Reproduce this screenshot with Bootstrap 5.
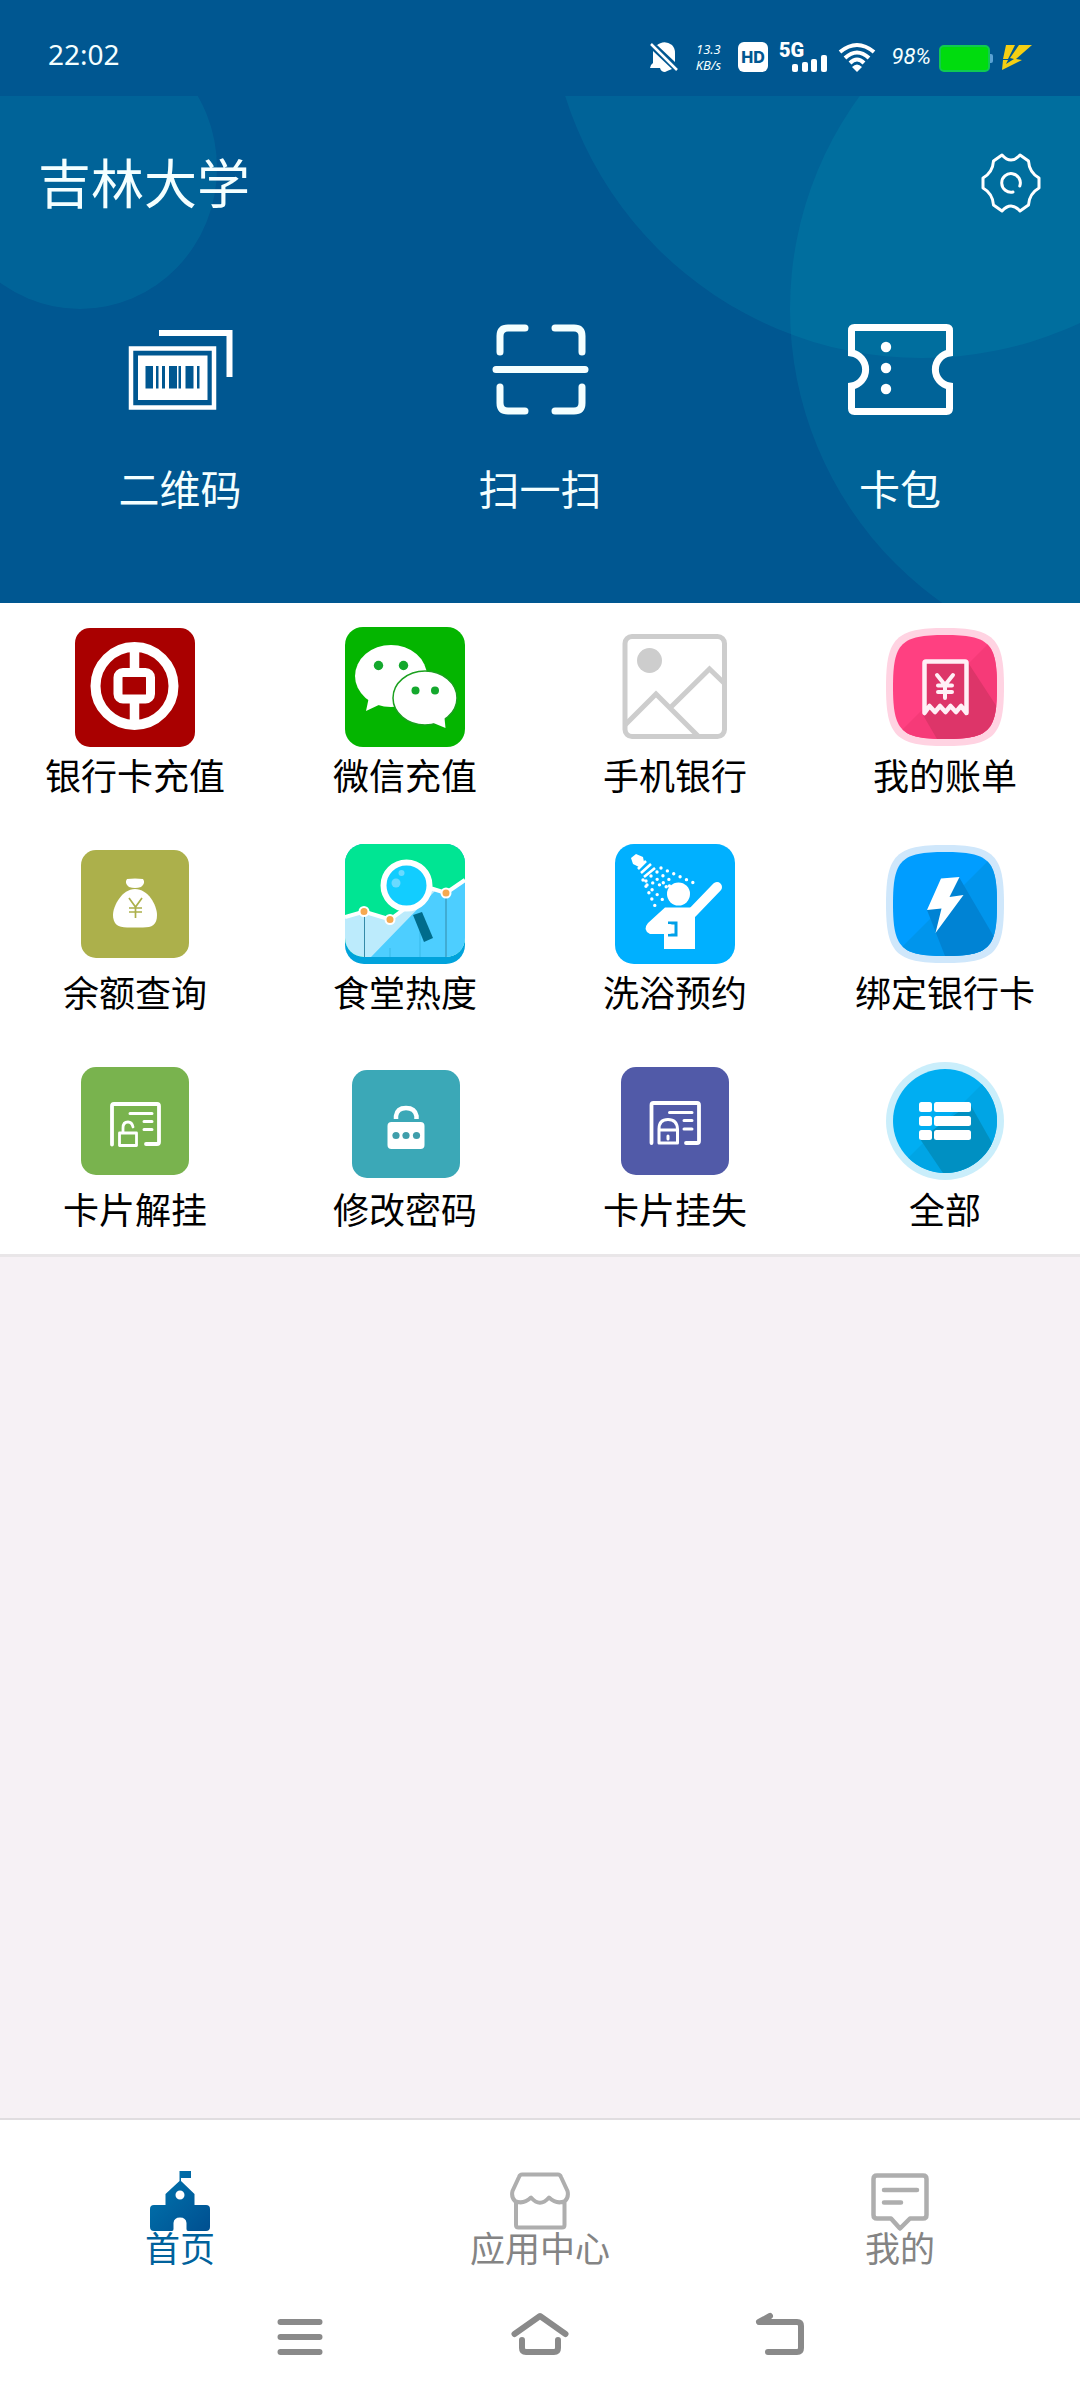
<!DOCTYPE html>
<html lang="zh-CN">
<head>
<meta charset="utf-8">
<meta name="viewport" content="width=device-width, initial-scale=1">
<title>吉林大学</title>
<link href="https://cdn.jsdelivr.net/npm/bootstrap@5.3.0/dist/css/bootstrap.min.css" rel="stylesheet">
<style>
  body { font-family: "Noto Sans CJK SC", sans-serif; background: #f6f1f5; }
  svg { display: block; flex: none; }
  .hero { background: #005791; color: #f4ffff; }
  .status { height: 96px; padding: 42px 48px 24px 48px; line-height: 30px; }
  .clock { font: 28px/26px "Noto Sans", sans-serif; padding-bottom: 6px; }
  .speed { font: italic 13px/16px "Noto Sans", sans-serif; width: 28px; }
  .percent { font: italic 22px/30px Roboto, sans-serif; }
  .banner { padding-bottom: 86px; }
  .banner-bg { position: absolute; inset: 0; width: 100%; height: 100%; }
  .title-row { padding: 51px 39px 0 38px; }
  .title-row h1 { font-size: 53px; line-height: 68px; font-weight: 400; }
  .quick { margin-top: 102px; }
  .quick a { color: inherit; font-size: 41px; line-height: 60px; gap: 40px; }
  .services { padding: 24px 0 22px; border-bottom: 3px solid #e9e6e8; }
  .services a { color: #000; font-size: 36px; line-height: 48px; gap: 3px; padding-bottom: 46px; }
  .services .row:last-child a { padding-bottom: 0; }
  .bottom { border-top: 2px solid #e0dde0; }
  .tabs { padding-top: 51px; }
  .tabs a { color: #848484; font-size: 35px; line-height: 32px; }
  .tabs a.active { color: #00629c; }
  .sysnav { padding: 42px 0 35px; }
  .ln { fill: none; stroke: currentColor; stroke-linecap: round; stroke-linejoin: round; }
</style>
</head>
<body class="d-flex flex-column min-vh-100">

<header class="hero">
  <div class="status d-flex align-items-center">
    <div class="clock me-auto">22:02</div>
    <svg width="28" height="30" viewBox="0 0 28 30" fill="#fff"><path d="M6 4Q14-3 22 3Q25 6 25 11V20L7 3ZM3 9L22 27Q17 29 15 30Q11 30 10 26H0Q0 23 3 21Z"/><path d="M1 2L27 28" stroke="#fff" stroke-width="2.5"/></svg>
    <div class="speed text-center ms-3 me-3">13.3<br>KB/s</div>
    <svg width="30" height="30" viewBox="0 0 30 30"><rect width="30" height="30" rx="6" fill="#fff"/><text x="15" y="21" font-family="Inter,sans-serif" font-weight="800" font-size="16" text-anchor="middle" fill="#005791">HD</text></svg>
    <svg class="ms-2" width="51" height="38" viewBox="-1 -4 51 38" fill="#fff"><text x="2" y="15" font-family="Roboto,sans-serif" font-weight="900" font-size="20">5G</text><rect x="15" y="22" width="6" height="8" rx="2"/><rect x="25" y="20" width="6" height="10" rx="2"/><rect x="34" y="17" width="6" height="13" rx="2"/><rect x="44" y="13" width="6" height="17" rx="2"/></svg>
    <svg class="ms-2" width="44" height="30" viewBox="-4 0 44 30"><g fill="none" stroke="#fff" stroke-width="4"><path d="M1 10Q18-4 35 10M6 16Q18 5 30 16M11 21Q18 14 25 21"/></g><path d="M13 25Q18 20 23 25L18 30Z" fill="#fff"/></svg>
    <div class="percent ms-2 ps-1">98%</div>
    <svg class="ms-2" width="54" height="30" viewBox="0 0 54 30"><rect x="49" y="12" width="5" height="9" rx="2" fill="#5aa2d4"/><rect x="1" y="4" width="49" height="25" rx="4" fill="#00dc0e" stroke="#10c952" stroke-width="2"/></svg>
    <svg class="ms-2" width="31" height="30" viewBox="0 0 31 30" fill="#f5cf13"><path d="M5 3H14L7 17H2ZM18 3H31L15 17L21 18L1 28L2 18H7L5 22L13 17L9 16Z"/></svg>
  </div>

  <div class="banner position-relative">
    <svg class="banner-bg" viewBox="0 96 1080 507" preserveAspectRatio="none" fill="#00b4c3" fill-opacity=".14"><ellipse cx="80" cy="168" rx="137" ry="141"/><circle cx="922" cy="-16" r="374"/><circle cx="1150" cy="309" r="360"/></svg>
    <div class="title-row position-relative d-flex align-items-center justify-content-between">
      <h1 class="m-0 pb-1">吉林大学</h1>
      <button type="button" class="btn p-0 border-0 text-white" aria-label="设置">
        <svg width="60" height="60" viewBox="-30 -30 60 60"><g class="ln" stroke-width="3"><path d="M-9-28Q0-18 9-28L17.500-22C18-14 21-9 28-5V5C21 9 18 14 17.500 22L9 28Q0 18-9 28L-17.500 22C-18 14-21 9-28 5V-5C-21-9-18-14-17.500-22Z"/><path d="M8.800 3A9.300 9.300 0 1 0 2 9"/></g></svg>
      </button>
    </div>
    <nav class="quick position-relative row g-0 text-center">
      <a href="#" class="col-4 d-flex flex-column align-items-center text-decoration-none">
        <svg width="108" height="96" viewBox="0 0 108 96"><g fill="none" stroke="#fff"><path d="M33 12H103.500V56" stroke-width="6"/><path d="M5 27.500H88V86.500H5Z" stroke-width="4.500"/></g><path fill="#fff" d="M12 34.500H81.500V79H12Z"/><path fill="#005791" d="M19.500 45h7.500v22.500h-7.500zM30 45h2.500v22.500H30zM36 45h3v22.500h-3zM43 45h8v22.500h-8zM52.500 45H55v22.500h-2.500zM59.500 45h8v22.500h-8zM71 45h2.500v22.500H71z"/></svg>
        <span>二维码</span></a>
      <a href="#" class="col-4 d-flex flex-column align-items-center text-decoration-none">
        <svg width="108" height="96" viewBox="0 0 108 96"><path class="ln" stroke="#fff" stroke-width="7" d="M39 7H22Q14 7 14 15V31M69 7H88Q96 7 96 15V31M10 48.500H99M14 66V82Q14 90 22 90H39M69 90H88Q96 90 96 82V66"/></svg>
        <span>扫一扫</span></a>
      <a href="#" class="col-4 d-flex flex-column align-items-center text-decoration-none">
        <svg width="108" height="96" viewBox="0 0 108 96"><path fill="none" stroke="#fff" stroke-width="7" d="M5.500 32V9.500Q5.500 6.500 8.500 6.500H100.500Q103.500 6.500 103.500 9.500V32A16.700 16.700 0 0 0 103.500 65V87.500Q103.500 90.500 100.500 90.500H8.500Q5.500 90.500 5.500 87.500V65A16.700 16.700 0 0 0 5.500 32Z"/><g fill="#fff"><circle cx="40" cy="26" r="5.200"/><circle cx="40" cy="47" r="5.200"/><circle cx="40" cy="68" r="5.200"/></g></svg>
        <span>卡包</span></a>
    </nav>
  </div>
</header>

<main class="flex-grow-1">
  <section class="services bg-white text-center">
    <div class="row g-0">
      <a href="#" class="col-3 d-flex flex-column align-items-center text-decoration-none">
        <svg width="120" height="120" viewBox="0 0 120 120"><rect width="120" height="119" y="1" rx="15" fill="#a90000"/><g fill="none" stroke="#fff"><circle cx="59.500" cy="59" r="39" stroke-width="10"/><rect x="43" y="45.500" width="32.500" height="26.500" rx="5" stroke-width="9"/><path d="M59.500 20V42M59.500 76V98" stroke-width="9.500"/></g></svg>
        <span>银行卡充值</span></a>
      <a href="#" class="col-3 d-flex flex-column align-items-center text-decoration-none">
        <svg width="120" height="120" viewBox="0 0 120 120"><rect width="120" height="120" rx="18" fill="#04b500"/><g fill="#fff"><ellipse cx="46" cy="49" rx="36" ry="31"/><path d="M24 70L21 84L38 76Z"/><ellipse cx="80" cy="71" rx="32" ry="27" stroke="#1ba01f" stroke-width="1.500"/><path d="M99 86L100.500 101L86 95Z"/></g><g fill="#14a82d"><circle cx="33.500" cy="38.500" r="4.700"/><circle cx="58.500" cy="38.500" r="4.700"/><circle cx="70.500" cy="63.500" r="4"/><circle cx="90" cy="63.500" r="4"/></g></svg>
        <span>微信充值</span></a>
      <a href="#" class="col-3 d-flex flex-column align-items-center text-decoration-none">
        <svg width="120" height="120" viewBox="0 0 120 120"><g fill="none" stroke="#cdcdcd" stroke-width="5"><rect x="10" y="9.500" width="99.500" height="100" rx="7"/><path d="M10 98L41 67L83 109M56 80L94.500 42L109 56"/></g><circle cx="34.500" cy="33.500" r="12.500" fill="#cdcdcd"/></svg>
        <span>手机银行</span></a>
      <a href="#" class="col-3 d-flex flex-column align-items-center text-decoration-none">
        <svg width="120" height="120" viewBox="0 0 120 120"><defs><path id="sq" d="M60 8C104 8 112 16 112 60S104 112 60 112S8 104 8 60S16 8 60 8Z"/><clipPath id="sqc"><use href="#sq"/></clipPath></defs><path fill="#ffd3e2" d="M60 1C109 1 119 11 119 60S109 119 60 119S1 109 1 60S11 1 60 1Z"/><use href="#sq" fill="#ff4081"/><g clip-path="url(#sqc)"><path d="M112 8V112H8Z" fill="#f63a78"/><path d="M38 34H82L112 80V112H52L38 88Z" fill="#dd3569"/></g><g class="ln" color="#fff0f6"><path stroke-width="4.500" d="M39.500 86V36Q39.500 34.500 41 34.500H80Q81.500 34.500 81.500 36V86L76 79L71 85L65.500 79L60.500 85L55 79L50 85L44.500 79Z"/><path stroke-width="4" d="M52 48L60 58L68 48M53 58.500H67M53 65H67M60 58V71"/></g></svg>
        <span>我的账单</span></a>
    </div>
    <div class="row g-0">
      <a href="#" class="col-3 d-flex flex-column align-items-center text-decoration-none">
        <svg width="120" height="120" viewBox="0 0 120 120"><rect x="6" y="6" width="108" height="108" rx="15" fill="#acb04b"/><g fill="#fff"><path d="M52 35Q60 34 68 35Q71 39 66 43Q60 45 54 43Q49 39 52 35Z"/><path d="M60 45C73 45 82 61 82 71S77 83.500 68 83.500H52C43 83.500 38 80 38 71S47 45 60 45Z"/></g><path d="M54 54L60.500 63L67 54M54 64H67M54 68H67M60.500 63V74" fill="none" stroke="#acb04b" stroke-width="1.700"/></svg>
        <span>余额查询</span></a>
      <a href="#" class="col-3 d-flex flex-column align-items-center text-decoration-none">
        <svg width="120" height="120" viewBox="0 0 120 120"><defs><clipPath id="r1"><rect width="120" height="120" rx="19"/></clipPath><clipPath id="r2"><rect y="-10" width="120" height="123" rx="19"/></clipPath></defs><g clip-path="url(#r1)"><rect width="120" height="120" fill="#00a3dc"/><g clip-path="url(#r2)"><rect width="120" height="113" fill="#00e593"/><path fill="#bcebfc" d="M0 73L19 67.500L45 75.500L85 44L101 49L120 36V113H0Z"/><path fill="#4dceff" d="M26 113L90 47L101 49L120 37V113Z"/><path d="M19.500 72V113M101 50V113" stroke="#358aa8" stroke-width="1"/><path d="M75 77V113M45 104V113" stroke="#37b9e8" stroke-width="1"/><path d="M0 73L19 67.500L45 75.500L58 66L82 43L101 49L120 36" fill="none" stroke="#fff" stroke-width="4"/></g><g fill="#f6a950" stroke="#fff" stroke-width="2"><circle cx="19" cy="67.500" r="4.500"/><circle cx="45" cy="75.500" r="4.500"/><circle cx="101" cy="49" r="4.500"/></g><circle cx="61.500" cy="41.500" r="23" fill="#12cdff" stroke="#fff" stroke-width="6"/><circle cx="51" cy="39" r="4.500" fill="#69daff"/><circle cx="56.500" cy="29" r="3" fill="#69daff"/><path fill="#006c8c" d="M68 71L77 68L88 94L79 98Z"/></g></svg>
        <span>食堂热度</span></a>
      <a href="#" class="col-3 d-flex flex-column align-items-center text-decoration-none">
        <svg width="120" height="120" viewBox="0 0 120 120"><rect width="120" height="120" rx="19" fill="#00b0ff"/><g fill="#fff"><circle cx="63.500" cy="50" r="11.500"/><path d="M50 63.500H76L80 72V105H49V90H35Q27 86 33 79Z"/><path d="M16 14L21 10L28 13L29 18L24 23L18 20Z"/></g><path d="M102 43L77 69" stroke="#fff" stroke-width="10" stroke-linecap="round"/><path d="M53 79H61V91H53" fill="none" stroke="#00a0e8" stroke-width="3"/><circle cx="54" cy="85" r="5" fill="#fff"/><path d="M23 25L31 17M26 29L36 20M29 33L40 24" stroke="#fff" stroke-width="2.600"/><g fill="none" stroke="#fff" stroke-width="3.400" stroke-linecap="round" stroke-dasharray="0 7"><path d="M46 24L81 40M42 28L58 38M36 32L58 44M31 37L52 43M28 36L41 64M32 41L50 58"/></g></svg>
        <span>洗浴预约</span></a>
      <a href="#" class="col-3 d-flex flex-column align-items-center text-decoration-none">
        <svg width="120" height="120" viewBox="0 0 120 120"><path fill="#cfe7fb" d="M60 1C109 1 119 11 119 60S109 119 60 119S1 109 1 60S11 1 60 1Z"/><use href="#sq" fill="#009dff"/><g clip-path="url(#sqc)"><path d="M112 8V112H8Z" fill="#0095ec"/><path d="M74 33L112 98V112H60L42 66Z" fill="#0083d4"/></g><path fill="#fff" d="M56 34.500L74.500 33L64.500 53L78.500 51L50.500 89L56.500 64.500L42 66Z"/></svg>
        <span>绑定银行卡</span></a>
    </div>
    <div class="row g-0">
      <a href="#" class="col-3 d-flex flex-column align-items-center text-decoration-none">
        <svg width="120" height="120" viewBox="0 0 120 120"><rect x="6" y="6" width="108" height="108" rx="15" fill="#79b34e"/><g class="ln" color="#fff" stroke-width="3.800"><path d="M37 83.500V45Q37 43 39 43H82Q84 43 84 45V81Q84 83 82 83H71"/><path stroke-width="3" d="M55 52.500H77M69 60.500H77M69 68.500H77"/><path stroke-width="2.800" d="M44.500 72H61.500V84.500H44.500ZM48 71V67Q48 61 53 61Q57 61 58 66"/></g></svg>
        <span>卡片解挂</span></a>
      <a href="#" class="col-3 d-flex flex-column align-items-center text-decoration-none">
        <svg width="120" height="120" viewBox="0 0 120 120"><rect x="7" y="9" width="108" height="108" rx="15" fill="#3ba8b7"/><path d="M51 58V55Q52 47 61 47T71.500 55V58" fill="none" stroke="#fff" stroke-width="4.500"/><rect x="42.500" y="61" width="37" height="27" rx="4" fill="#fff"/><g fill="#3f9eab"><circle cx="51" cy="74.500" r="3.600"/><circle cx="61" cy="74.500" r="3.600"/><circle cx="71.500" cy="74.500" r="3.600"/></g></svg>
        <span>修改密码</span></a>
      <a href="#" class="col-3 d-flex flex-column align-items-center text-decoration-none">
        <svg width="120" height="120" viewBox="0 0 120 120"><rect x="6" y="6" width="108" height="108" rx="15" fill="#515aa8"/><g class="ln" color="#fff" stroke-width="3.800"><path d="M36.500 82V44Q36.500 42 38.500 42H82Q84 42 84 44V80Q84 82 82 82H71"/><path stroke-width="3" d="M54.500 51.500H77M69 59.500H77M69 68H77M44 82V68Q44 58.500 53 58.500T62.500 68V82ZM44 69H62"/><path stroke-width="3" d="M53 75V78"/></g></svg>
        <span>卡片挂失</span></a>
      <a href="#" class="col-3 d-flex flex-column align-items-center text-decoration-none">
        <svg width="120" height="120" viewBox="0 0 120 120"><defs><clipPath id="cc"><circle cx="60" cy="60" r="52"/></clipPath></defs><circle cx="60" cy="60" r="59" fill="#caeefb"/><circle cx="60" cy="60" r="52" fill="#00aef2"/><g clip-path="url(#cc)"><path d="M112 8V112H8Z" fill="#00a5e5"/><path d="M85 43L115 96V115H60L35 78Z" fill="#0090c2"/></g><g fill="#fff"><rect x="34" y="41" width="13" height="10" rx="2.500"/><rect x="34" y="55" width="13" height="10" rx="2.500"/><rect x="34" y="69" width="13" height="10" rx="2.500"/><rect x="49" y="41" width="37" height="10" rx="2.500"/><rect x="49" y="55" width="37" height="10" rx="2.500"/><rect x="49" y="69" width="37" height="10" rx="2.500"/></g></svg>
        <span>全部</span></a>
    </div>
  </section>
</main>

<footer class="bottom bg-white">
  <nav class="tabs row g-0">
    <a href="#" class="active col-4 d-flex flex-column align-items-center text-decoration-none">
      <svg width="60" height="60" viewBox="0 0 60 60"><defs><linearGradient id="sg" x2="1" y2="1"><stop stop-color="#0077b0"/><stop offset="1" stop-color="#004f90"/></linearGradient></defs><path fill="url(#sg)" fill-rule="evenodd" d="M29.500 0H41V7H31V10L44.500 23V34H56Q60 34 60 38V56Q60 60 56 60H38Q36.500 60 36.500 58V52Q36 46.500 30 46.500T23.500 52V58Q23.500 60 22 60H4Q0 60 0 56V38Q0 34 4 34H15.500V23L29.500 10ZM30 19.500A4.500 4.500 0 1 0 30 28.500A4.500 4.500 0 1 0 30 19.500Z"/></svg>
      <span>首页</span></a>
    <a href="#" class="col-4 d-flex flex-column align-items-center text-decoration-none">
      <svg width="60" height="60" viewBox="0 0 60 60"><path class="ln" color="#aeaeae" stroke-width="4" d="M12 3.500H48Q50 3.500 51 6L57.500 20Q59 26 55 30Q47 34 39 26.500Q30 37 21 26.500Q13 34 5 30Q1 26 2.500 20L9 6Q10 3.500 12 3.500ZM6 31V54Q6 56.500 8.500 56.500H52Q54.500 56.500 54.500 54V31"/></svg>
      <span>应用中心</span></a>
    <a href="#" class="col-4 d-flex flex-column align-items-center text-decoration-none">
      <svg width="60" height="60" viewBox="0 0 60 60"><path class="ln" color="#aeaeae" stroke-width="4.500" d="M7 4.500H53Q56.500 4.500 56.500 8V44Q56.500 47.500 53 47.500H40L30 57.500L21 47.500H7Q3.500 47.500 3.500 44V8Q3.500 4.500 7 4.500ZM14 19H47M14 31.500H31"/></svg>
      <span>我的</span></a>
  </nav>
  <div class="sysnav row g-0 justify-content-center">
    <div class="col-8 d-flex justify-content-around">
      <button type="button" class="btn p-0 border-0" aria-label="最近任务"><svg width="60" height="60" viewBox="0 0 60 60"><path class="ln" color="#8a8a8a" stroke-width="6" d="M10.500 17H49.500M10.500 32H49.500M10.500 47H49.500"/></svg></button>
      <button type="button" class="btn p-0 border-0" aria-label="主屏幕"><svg width="60" height="60" viewBox="0 0 60 60"><path class="ln" color="#8a8a8a" stroke-width="6" d="M4.500 29L30 11L55.500 29M12 35V43Q12 47 16 47H44Q48 47 48 43V35"/></svg></button>
      <button type="button" class="btn p-0 border-0" aria-label="返回"><svg width="60" height="60" viewBox="0 0 60 60"><path class="ln" color="#8a8a8a" stroke-width="6" d="M20 11L9 17H47Q51 17 51 21V43Q51 47 47 47H18"/></svg></button>
    </div>
  </div>
</footer>

<script src="https://cdn.jsdelivr.net/npm/bootstrap@5.3.0/dist/js/bootstrap.bundle.min.js"></script>
</body>
</html>
